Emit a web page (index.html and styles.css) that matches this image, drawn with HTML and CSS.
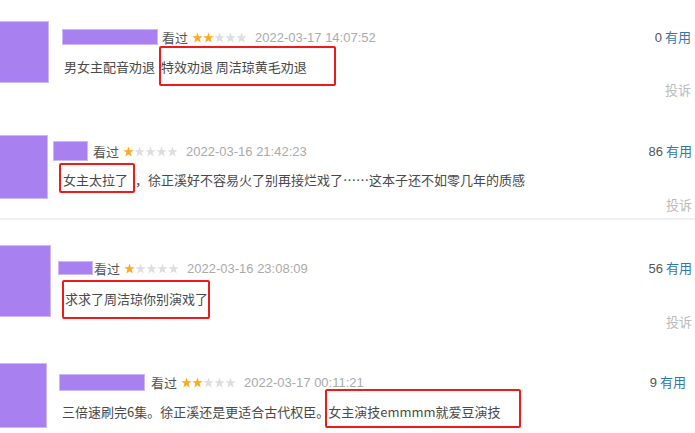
FILE: index.html
```html
<!DOCTYPE html>
<html lang="zh-CN">
<head>
    <meta charset="UTF-8">
    <meta name="viewport" content="width=device-width, initial-scale=1.0">
    <title>短评截图</title>
    <link rel="stylesheet" href="styles.css">
</head>
<body>
    <!-- 星星图标 -->
    <svg class="defs" aria-hidden="true">
        <symbol id="star" viewBox="0 0 10 10">
            <polygon points="5,0.4 6.18,3.78 9.76,3.85 6.9,6.02 7.94,9.45 5,7.4 2.06,9.45 3.1,6.02 0.24,3.85 3.82,3.78"/>
        </symbol>
    </svg>

    <div class="collage">
        <!-- 第一条 -->
        <section class="review review--1">
            <div class="avatar"></div>
            <div class="body">
                <div class="meta">
                    <span class="name"></span>
                    <span class="status">看过</span>
                    <svg class="stars" width="55" height="11" viewBox="0 0 55 11">
                        <use href="#star" class="on" x="0" width="11" height="11"/>
                        <use href="#star" class="on" x="11" width="11" height="11"/>
                        <use href="#star" class="off" x="22" width="11" height="11"/>
                        <use href="#star" class="off" x="33" width="11" height="11"/>
                        <use href="#star" class="off" x="44" width="11" height="11"/>
                    </svg>
                    <span class="time">2022-03-17 14:07:52</span>
                </div>
                <p class="comment">男女主配音劝退 <span class="mark">特效劝退 周洁琼黄毛劝退</span></p>
            </div>
            <div class="side">
                <span class="votes"><span class="count">0</span> <a href="#">有用</a></span>
                <span class="report">投诉</span>
            </div>
        </section>

        <!-- 第二条 -->
        <section class="review review--2">
            <div class="avatar"></div>
            <div class="body">
                <div class="meta">
                    <span class="name"></span>
                    <span class="status">看过</span>
                    <svg class="stars" width="55" height="11" viewBox="0 0 55 11">
                        <use href="#star" class="on" x="0" width="11" height="11"/>
                        <use href="#star" class="off" x="11" width="11" height="11"/>
                        <use href="#star" class="off" x="22" width="11" height="11"/>
                        <use href="#star" class="off" x="33" width="11" height="11"/>
                        <use href="#star" class="off" x="44" width="11" height="11"/>
                    </svg>
                    <span class="time">2022-03-16 21:42:23</span>
                </div>
                <p class="comment"><span class="mark">女主太拉了</span>，徐正溪好不容易火了别再接烂戏了……这本子还不如零几年的质感</p>
            </div>
            <div class="side">
                <span class="votes"><span class="count">86</span> <a href="#">有用</a></span>
                <span class="report">投诉</span>
            </div>
        </section>

        <!-- 第三条 -->
        <section class="review review--3">
            <div class="avatar"></div>
            <div class="body">
                <div class="meta">
                    <span class="name"></span>
                    <span class="status">看过</span>
                    <svg class="stars" width="55" height="11" viewBox="0 0 55 11">
                        <use href="#star" class="on" x="0" width="11" height="11"/>
                        <use href="#star" class="off" x="11" width="11" height="11"/>
                        <use href="#star" class="off" x="22" width="11" height="11"/>
                        <use href="#star" class="off" x="33" width="11" height="11"/>
                        <use href="#star" class="off" x="44" width="11" height="11"/>
                    </svg>
                    <span class="time">2022-03-16 23:08:09</span>
                </div>
                <p class="comment"><span class="mark">求求了周洁琼你别演戏了</span></p>
            </div>
            <div class="side">
                <span class="votes"><span class="count">56</span> <a href="#">有用</a></span>
                <span class="report">投诉</span>
            </div>
        </section>

        <!-- 第四条 -->
        <section class="review review--4">
            <div class="avatar"></div>
            <div class="body">
                <div class="meta">
                    <span class="name"></span>
                    <span class="status">看过</span>
                    <svg class="stars" width="55" height="11" viewBox="0 0 55 11">
                        <use href="#star" class="on" x="0" width="11" height="11"/>
                        <use href="#star" class="on" x="11" width="11" height="11"/>
                        <use href="#star" class="off" x="22" width="11" height="11"/>
                        <use href="#star" class="off" x="33" width="11" height="11"/>
                        <use href="#star" class="off" x="44" width="11" height="11"/>
                    </svg>
                    <span class="time">2022-03-17 00:11:21</span>
                </div>
                <p class="comment">三倍速刷完6集。徐正溪还是更适合古代权臣。<span class="mark">女主演技emmmm就爱豆演技</span></p>
            </div>
            <div class="side">
                <span class="votes"><span class="count">9</span> <a href="#">有用</a></span>
            </div>
        </section>
    </div>
</body>
</html>
```

FILE: styles.css
```css
/* 基础 */
* {
    margin: 0;
    padding: 0;
    box-sizing: border-box;
}

body {
    font-family: "Noto Sans CJK SC", "Liberation Sans", sans-serif;
    font-size: 13px;
    color: #494949;
    background: #fff;
    width: 695px;
    height: 433px;
    overflow: hidden;
}

.defs {
    position: absolute;
    width: 0;
    height: 0;
}

/* 每一条短评截图 */
.review {
    display: flex;
    align-items: flex-start;
    height: var(--h);
    overflow: hidden;
}

.review--1 {
    --h: 110px;
    --av-w: 49px; --av-h: 62px; --av-top: 21px;
    --gap: 13px; --top: 27px;
    --name-w: 96px; --name-h: 16px; --name-gap: 4px;
    --c-top: 10px; --c-left: 2px;
    --side-gap: 32px; --right: 4px;
}

.review--2 {
    --h: 110px;
    --av-w: 48px; --av-h: 64px; --av-top: 25px;
    --gap: 5px; --top: 31px;
    --name-w: 35px; --name-h: 20px; --name-gap: 5px;
    --c-top: 9px; --c-left: 10px;
    --side-gap: 33px; --right: 3px;
    border-bottom: 2px solid #f0f0f0;
}

.review--3 {
    --h: 110px;
    --av-w: 51px; --av-h: 72px; --av-top: 25px;
    --gap: 7px; --top: 38px;
    --name-w: 35px; --name-h: 14px; --name-gap: 1px;
    --c-top: 11px; --c-left: 7px;
    --side-gap: 33px; --right: 3px;
}

.review--4 {
    --h: 103px;
    --av-w: 47px; --av-h: 65px; --av-top: 33px;
    --gap: 12px; --top: 42px;
    --name-w: 86px; --name-h: 17px; --name-gap: 6px;
    --c-top: 10px; --c-left: 3px;
    --side-gap: 33px; --right: 9px;
}

/* 头像与昵称（已打码） */
.avatar {
    flex: none;
    width: var(--av-w);
    height: var(--av-h);
    margin-top: var(--av-top);
    background: #a980ef;
    border: 1px solid #cdb8f7;
    border-left: none;
}

.body {
    flex: 1;
    min-width: 0;
    margin-left: var(--gap);
    padding-top: var(--top);
}

.meta {
    display: flex;
    align-items: center;
    height: 20px;
    white-space: nowrap;
}

.name {
    width: var(--name-w);
    height: var(--name-h);
    margin-right: var(--name-gap);
    background: #a980ef;
    border: 1px solid #cdb8f7;
}

.status {
    color: #555;
}

.stars {
    display: block;
    margin: 0 8px 0 4px;
}

.stars .on {
    fill: #ffa91f;
}

.stars .off {
    fill: #dedede;
}

.time {
    font-family: "Liberation Sans", sans-serif;
    color: #aaa;
}

/* 短评内容 */
.comment {
    margin-top: var(--c-top);
    padding-left: var(--c-left);
    line-height: 20px;
    white-space: nowrap;
}

.mark {
    border: 2px solid #ef1b1b;
    border-radius: 2px;
}

.review--1 .mark { padding: 9px 27px 8px 0; margin-left: 1px; }
.review--2 .mark { padding: 5px 5px 2px 2px; margin-left: -4px; }
.review--3 .mark { padding: 7px 0 9px 1px; margin-left: -3px; }
.review--4 .mark { padding: 11px 18px 5px 1px; margin-left: -4px; }

/* 右侧：有用 / 投诉 */
.side {
    flex: none;
    display: flex;
    flex-direction: column;
    align-items: flex-end;
    gap: var(--side-gap);
    padding-top: var(--top);
    padding-right: var(--right);
    line-height: 20px;
}

.count {
    font-family: "Liberation Sans", sans-serif;
    color: #555;
}

.votes a {
    color: #3377aa;
    text-decoration: none;
}

.report {
    color: #bbb;
}
```
